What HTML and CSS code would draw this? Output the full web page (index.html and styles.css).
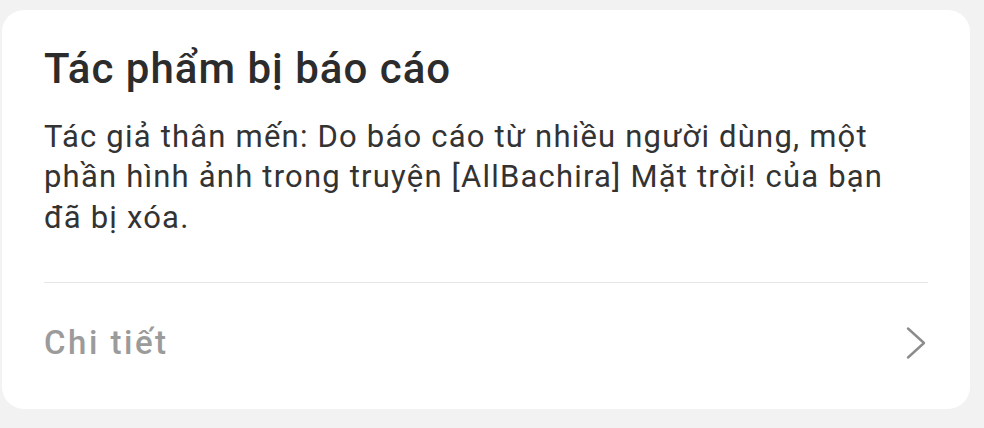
FILE: index.html
```html
<!DOCTYPE html>
<html>
  <head>
    <meta charset="utf-8">
    <title>Tác phẩm bị báo cáo</title>
    <link rel="stylesheet" href="styles.css">
  </head>
  <body>
    <div class="card">
      <h1 class="card-title">Tác phẩm bị báo cáo</h1>
      <p class="card-text">
        Tác giả thân mến: Do báo cáo từ nhiều người dùng, một phần hình ảnh trong truyện [AllBachira] Mặt trời! của bạn đã bị xóa.
      </p>
      <div class="divider"></div>
      <div class="detail-row">
        <span class="detail-label">Chi tiết</span>
        <svg class="chevron" width="22" height="34" viewBox="0 0 22 34">
          <polyline points="3,2.5 19,17 3,31.5" fill="none" stroke="#8c8c8c" stroke-width="2.4" stroke-linecap="round" stroke-linejoin="round"/>
        </svg>
      </div>
    </div>
  </body>
</html>
```

FILE: styles.css
```css
html, body {
  margin: 0;
  padding: 0;
}
body {
  background: #f2f2f2;
  font-family: Roboto, "Noto Sans", sans-serif;
  padding: 10px 14px 0 2px;
}
.card {
  background: #ffffff;
  border-radius: 22px;
  padding: 35px 42px 0 42px;
  width: 884px;
}
.card-title {
  margin: 0;
  font-size: 42px;
  line-height: 48px;
  font-weight: 500;
  letter-spacing: 1px;
  color: #2c2c2c;
}
.card-text {
  margin: 23.5px 0 0 0;
  font-size: 31px;
  line-height: 40.5px;
  letter-spacing: 1.2px;
  color: #333333;
}
.divider {
  margin-top: 44px;
  height: 1px;
  background: #e6e6e6;
}
.detail-row {
  display: flex;
  align-items: center;
  justify-content: space-between;
  padding: 42px 0 48px 0;
}
.detail-label {
  font-size: 33px;
  line-height: 36px;
  font-weight: 500;
  letter-spacing: 2.5px;
  color: #9b9b9b;
}
.chevron {
  margin-right: 1px;
}
```
